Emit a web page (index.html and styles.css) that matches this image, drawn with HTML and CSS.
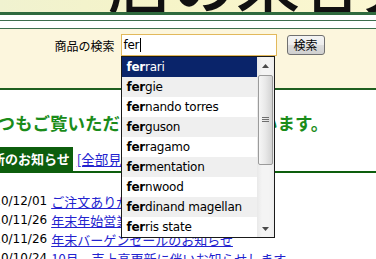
FILE: index.html
```html
<!DOCTYPE html>
<html lang="ja">
<head>
<meta charset="utf-8">
<title>商品の検索</title>
<link rel="stylesheet" href="styles.css">
</head>
<body>
<header class="banner"><div class="banner-text">店の来客兄</div></header>
<div class="brush"></div>
<div class="rule rule-a"></div>
<div class="rule rule-b"></div>
<section class="search">
  <form class="search-row">
    <label class="search-label">商品の検索</label>
    <div class="field">
      <div class="input">fer<span class="caret"></span></div>
      <div class="suggest">
        <ul class="suggest-list">
          <li class="active"><b>fer</b>rari</li>
          <li><b>fer</b>gie</li>
          <li><b>fer</b>nando torres</li>
          <li><b>fer</b>guson</li>
          <li><b>fer</b>ragamo</li>
          <li><b>fer</b>mentation</li>
          <li><b>fer</b>nwood</li>
          <li><b>fer</b>dinand magellan</li>
          <li><b>fer</b>ris state</li>
        </ul>
        <div class="sb">
          <div class="sb-btn"><svg width="7" height="4" viewBox="0 0 7 4"><path d="M0 4 L3.5 0 L7 4 Z" fill="#4a4a4a"/></svg></div>
          <div class="thumb"><svg width="7" height="6" viewBox="0 0 7 6"><path d="M0 0.5H7M0 2.5H7M0 4.5H7" stroke="#6e6e6e" stroke-width="1"/></svg></div>
          <div class="sb-space"></div>
          <div class="sb-btn"><svg width="7" height="4" viewBox="0 0 7 4"><path d="M0 0 L7 0 L3.5 4 Z" fill="#4a4a4a"/></svg></div>
        </div>
      </div>
    </div>
    <button type="button" class="btn">検索</button>
  </form>
</section>
<main class="content">
  <h2 class="greeting">いつもご覧いただきありがとうございます。</h2>
  <div class="news-head">
    <span class="news-title">最新のお知らせ</span>
    <a class="news-all" href="#">[全部見る]</a>
  </div>
  <ul class="news">
    <li><span class="date">2010/12/01</span><a href="#">ご注文ありがとうございました</a></li>
    <li><span class="date">2010/11/26</span><a href="#">年末年始営業のお知らせ</a></li>
    <li><span class="date">2010/11/26</span><a href="#">年末バーゲンセールのお知らせ</a></li>
    <li><span class="date">2010/10/24</span><a href="#">10月　売上高更新に伴いお知らせします</a></li>
  </ul>
</main>
</body>
</html>
```

FILE: styles.css
```css
* { box-sizing: border-box; }
html, body { margin: 0; padding: 0; }
body {
  width: 376px;
  height: 259px;
  overflow: hidden;
  background: #ffffff;
  font-family: "DejaVu Sans", "Noto Sans CJK JP", sans-serif;
  color: #000;
}

.banner {
  height: 12px;
  overflow: hidden;
  background: linear-gradient(90deg, #f0f2d0 0%, #f6f4c8 45%, #fbf7d3 100%);
}
.banner-text {
  font-family: "Noto Sans CJK JP", sans-serif;
  font-size: 64px;
  line-height: 64px;
  font-weight: 500;
  margin-top: -52px;
  padding-left: 108px;
  white-space: nowrap;
  color: #111;
}
.brush { height: 3px; background: #2f6a3e; }
.rule { height: 1px; background: #3d6e4c; }
.rule-a { margin-top: 5px; }
.rule-b { margin-top: 7px; }

.search {
  height: 61px;
  background: #fcf6dd;
  border-bottom: 2px solid #1f5f1f;
  padding-top: 5px;
}
.search-row {
  display: flex;
  justify-content: center;
  align-items: center;
  padding-left: 3px;
  margin: 0;
}
.search-label {
  font-family: "Noto Sans CJK JP", sans-serif;
  font-size: 12px;
  margin-right: 6px;
}
.field {
  position: relative;
  width: 156px;
  height: 22px;
}
.input {
  height: 22px;
  border: 1px solid #e2b95c;
  background: #fff;
  font-size: 12px;
  letter-spacing: -0.25px;
  padding-left: 2px;
  display: flex;
  align-items: center;
}
.caret {
  display: inline-block;
  width: 1px;
  height: 14px;
  background: #000;
  margin-left: 1px;
}
.btn {
  margin-left: 10px;
  width: 38px;
  height: 20px;
  padding: 0;
  border: 1px solid #707070;
  border-radius: 3px;
  background: linear-gradient(#f4f4f4 0%, #ececec 50%, #dddddd 51%, #cfcfcf 100%);
  font-family: "Noto Sans CJK JP", sans-serif;
  font-size: 12px;
  line-height: 18px;
  color: #000;
}

.suggest {
  position: absolute;
  left: 0;
  top: 22px;
  width: 154px;
  height: 182px;
  border: 1px solid #1a1a1a;
  background: #fff;
  display: flex;
  z-index: 10;
}
.suggest-list {
  flex: 1;
  list-style: none;
  margin: 0;
  padding: 0;
}
.suggest-list li {
  height: 20px;
  line-height: 20px;
  padding-left: 5px;
  font-size: 12px;
  letter-spacing: -0.25px;
  white-space: nowrap;
  overflow: hidden;
}
.suggest-list li:nth-child(even) { background: #efefef; }
.suggest-list li.active { background: #0a246a; color: #fff; }

.sb {
  width: 17px;
  background: linear-gradient(90deg, #e9e9e9, #f4f4f4 30%, #f4f4f4 70%, #ececec);
  display: flex;
  flex-direction: column;
  align-items: center;
}
.sb-btn {
  width: 17px;
  height: 17px;
  display: flex;
  align-items: center;
  justify-content: center;
}
.thumb {
  width: 15px;
  height: 90px;
  margin-top: 1px;
  border: 1px solid #9b9b9b;
  border-radius: 2px;
  background: linear-gradient(90deg, #f6f6f6, #e8e8e8 50%, #d3d3d3);
  display: flex;
  align-items: center;
  justify-content: center;
}
.sb-space { flex: 1; }

.content { margin-left: -24px; }
.greeting {
  margin: 23px 0 0;
  padding-left: 4px;
  font-family: "Noto Sans CJK JP", sans-serif;
  font-weight: 700;
  font-size: 17.5px;
  line-height: 20px;
  color: #1a8c1a;
  white-space: nowrap;
}
.news-head {
  margin-top: 14px;
  display: flex;
  align-items: center;
  border-bottom: 2px solid #0d5e0d;
}
.news-title {
  background: #0d5e0d;
  color: #fff;
  font-family: "Noto Sans CJK JP", sans-serif;
  font-weight: 700;
  font-size: 13px;
  line-height: 24px;
  padding: 0 3px;
  white-space: nowrap;
}
.news-all {
  margin-left: 4px;
  font-family: "Noto Sans CJK JP", sans-serif;
  font-size: 13.5px;
  color: #2323cf;
  white-space: nowrap;
}
.news {
  list-style: none;
  margin: 19px 0 0;
  padding-left: 2px;
}
.news li {
  display: flex;
  align-items: center;
  gap: 4px;
  height: 19px;
  white-space: nowrap;
}
.date { font-size: 12px; line-height: 19px; }
.news a {
  font-family: "Noto Sans CJK JP", sans-serif;
  font-size: 13px;
  line-height: 19px;
  color: #2323cf;
}
```
